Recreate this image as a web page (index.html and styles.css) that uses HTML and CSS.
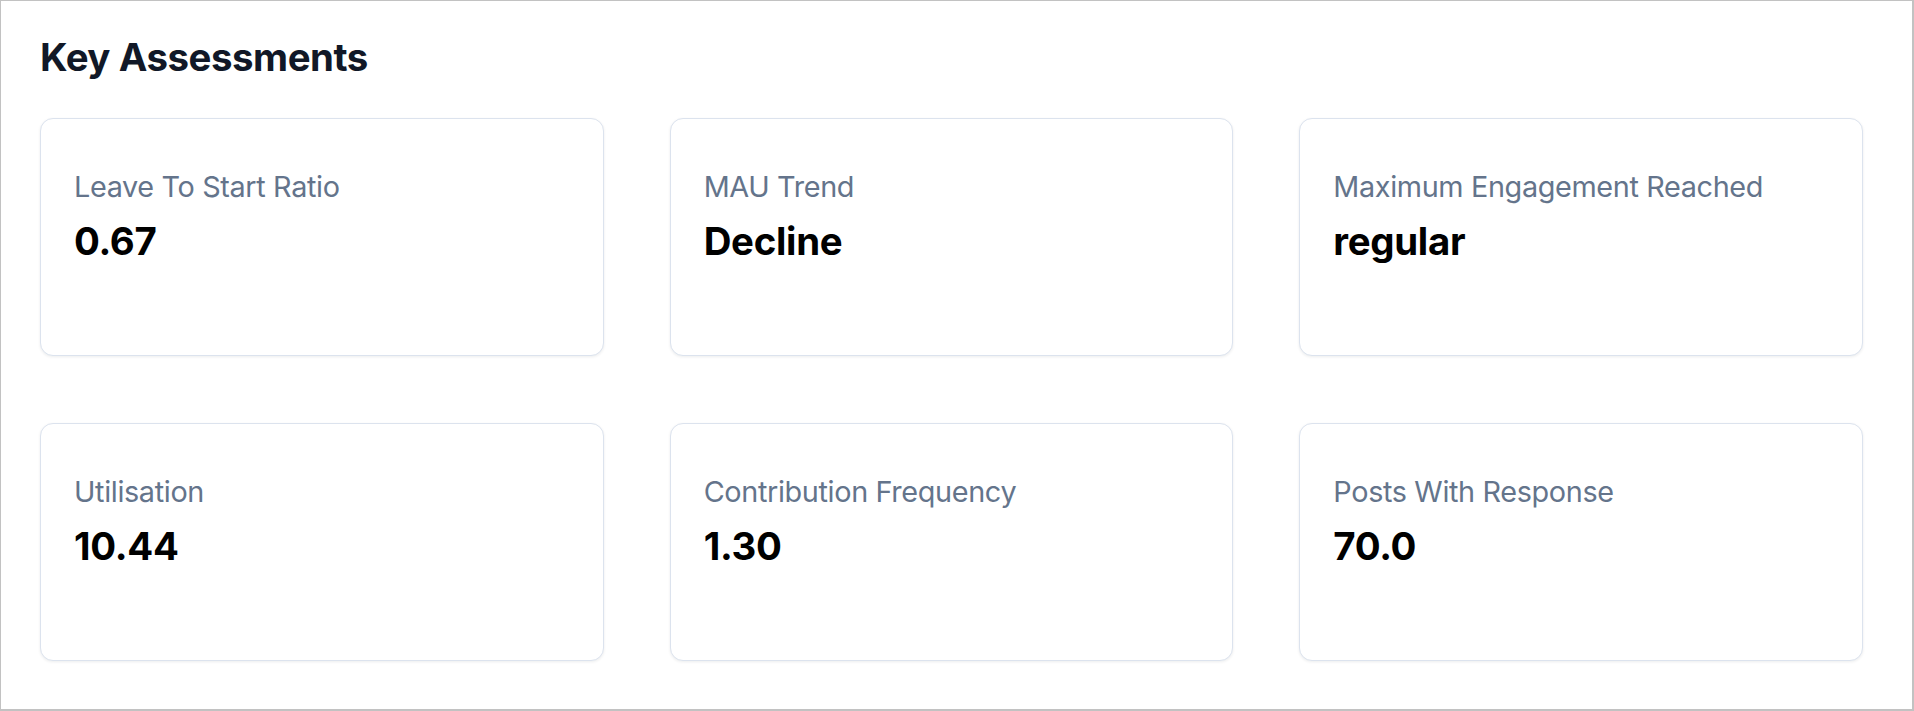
FILE: index.html
```html
<!DOCTYPE html>
<html lang="en">
<head>
<meta charset="utf-8">
<title>Key Assessments</title>
<link rel="stylesheet" href="styles.css">
</head>
<body>
<section class="panel">
  <h2 class="panel-title">Key Assessments</h2>
  <div class="grid">
    <div class="card">
      <div class="card-label">Leave To Start Ratio</div>
      <div class="card-value">0.67</div>
    </div>
    <div class="card">
      <div class="card-label">MAU Trend</div>
      <div class="card-value">Decline</div>
    </div>
    <div class="card">
      <div class="card-label">Maximum Engagement Reached</div>
      <div class="card-value">regular</div>
    </div>
    <div class="card">
      <div class="card-label">Utilisation</div>
      <div class="card-value">10.44</div>
    </div>
    <div class="card">
      <div class="card-label">Contribution Frequency</div>
      <div class="card-value">1.30</div>
    </div>
    <div class="card">
      <div class="card-label">Posts With Response</div>
      <div class="card-value">70.0</div>
    </div>
  </div>
</section>
</body>
</html>
```
FILE: styles.css
```css
* { box-sizing: border-box; }

html, body {
  margin: 0;
  padding: 0;
  background: #ffffff;
}

body {
  font-family: Inter, "Noto Sans", "Liberation Sans", sans-serif;
}

.panel {
  width: 1914px;
  height: 711px;
  border-style: solid;
  border-color: #c2c2c2;
  border-width: 1px 2px 2px 1px;
  padding: 31px 49px 0 39px;
  background: #ffffff;
}

.panel-title {
  margin: 0;
  font-size: 38.4px;
  line-height: 51px;
  font-weight: 700;
  color: #111827;
  letter-spacing: -0.45px;
}

.grid {
  margin-top: 35px;
  display: grid;
  grid-template-columns: repeat(3, 1fr);
  column-gap: 66px;
  row-gap: 67px;
}

.card {
  height: 238px;
  border: 1px solid #dce3ee;
  border-radius: 13px;
  background: #ffffff;
  box-shadow: 0 1px 3px rgba(15, 23, 42, 0.08);
  padding: 46px 33px 0 33px;
}

.card-label {
  font-size: 28.8px;
  line-height: 44.8px;
  font-weight: 400;
  color: #64748b;
  letter-spacing: -0.35px;
}

.card-value {
  margin-top: 6px;
  font-size: 38.4px;
  line-height: 51px;
  font-weight: 700;
  color: #000000;
  letter-spacing: -0.3px;
}
```
